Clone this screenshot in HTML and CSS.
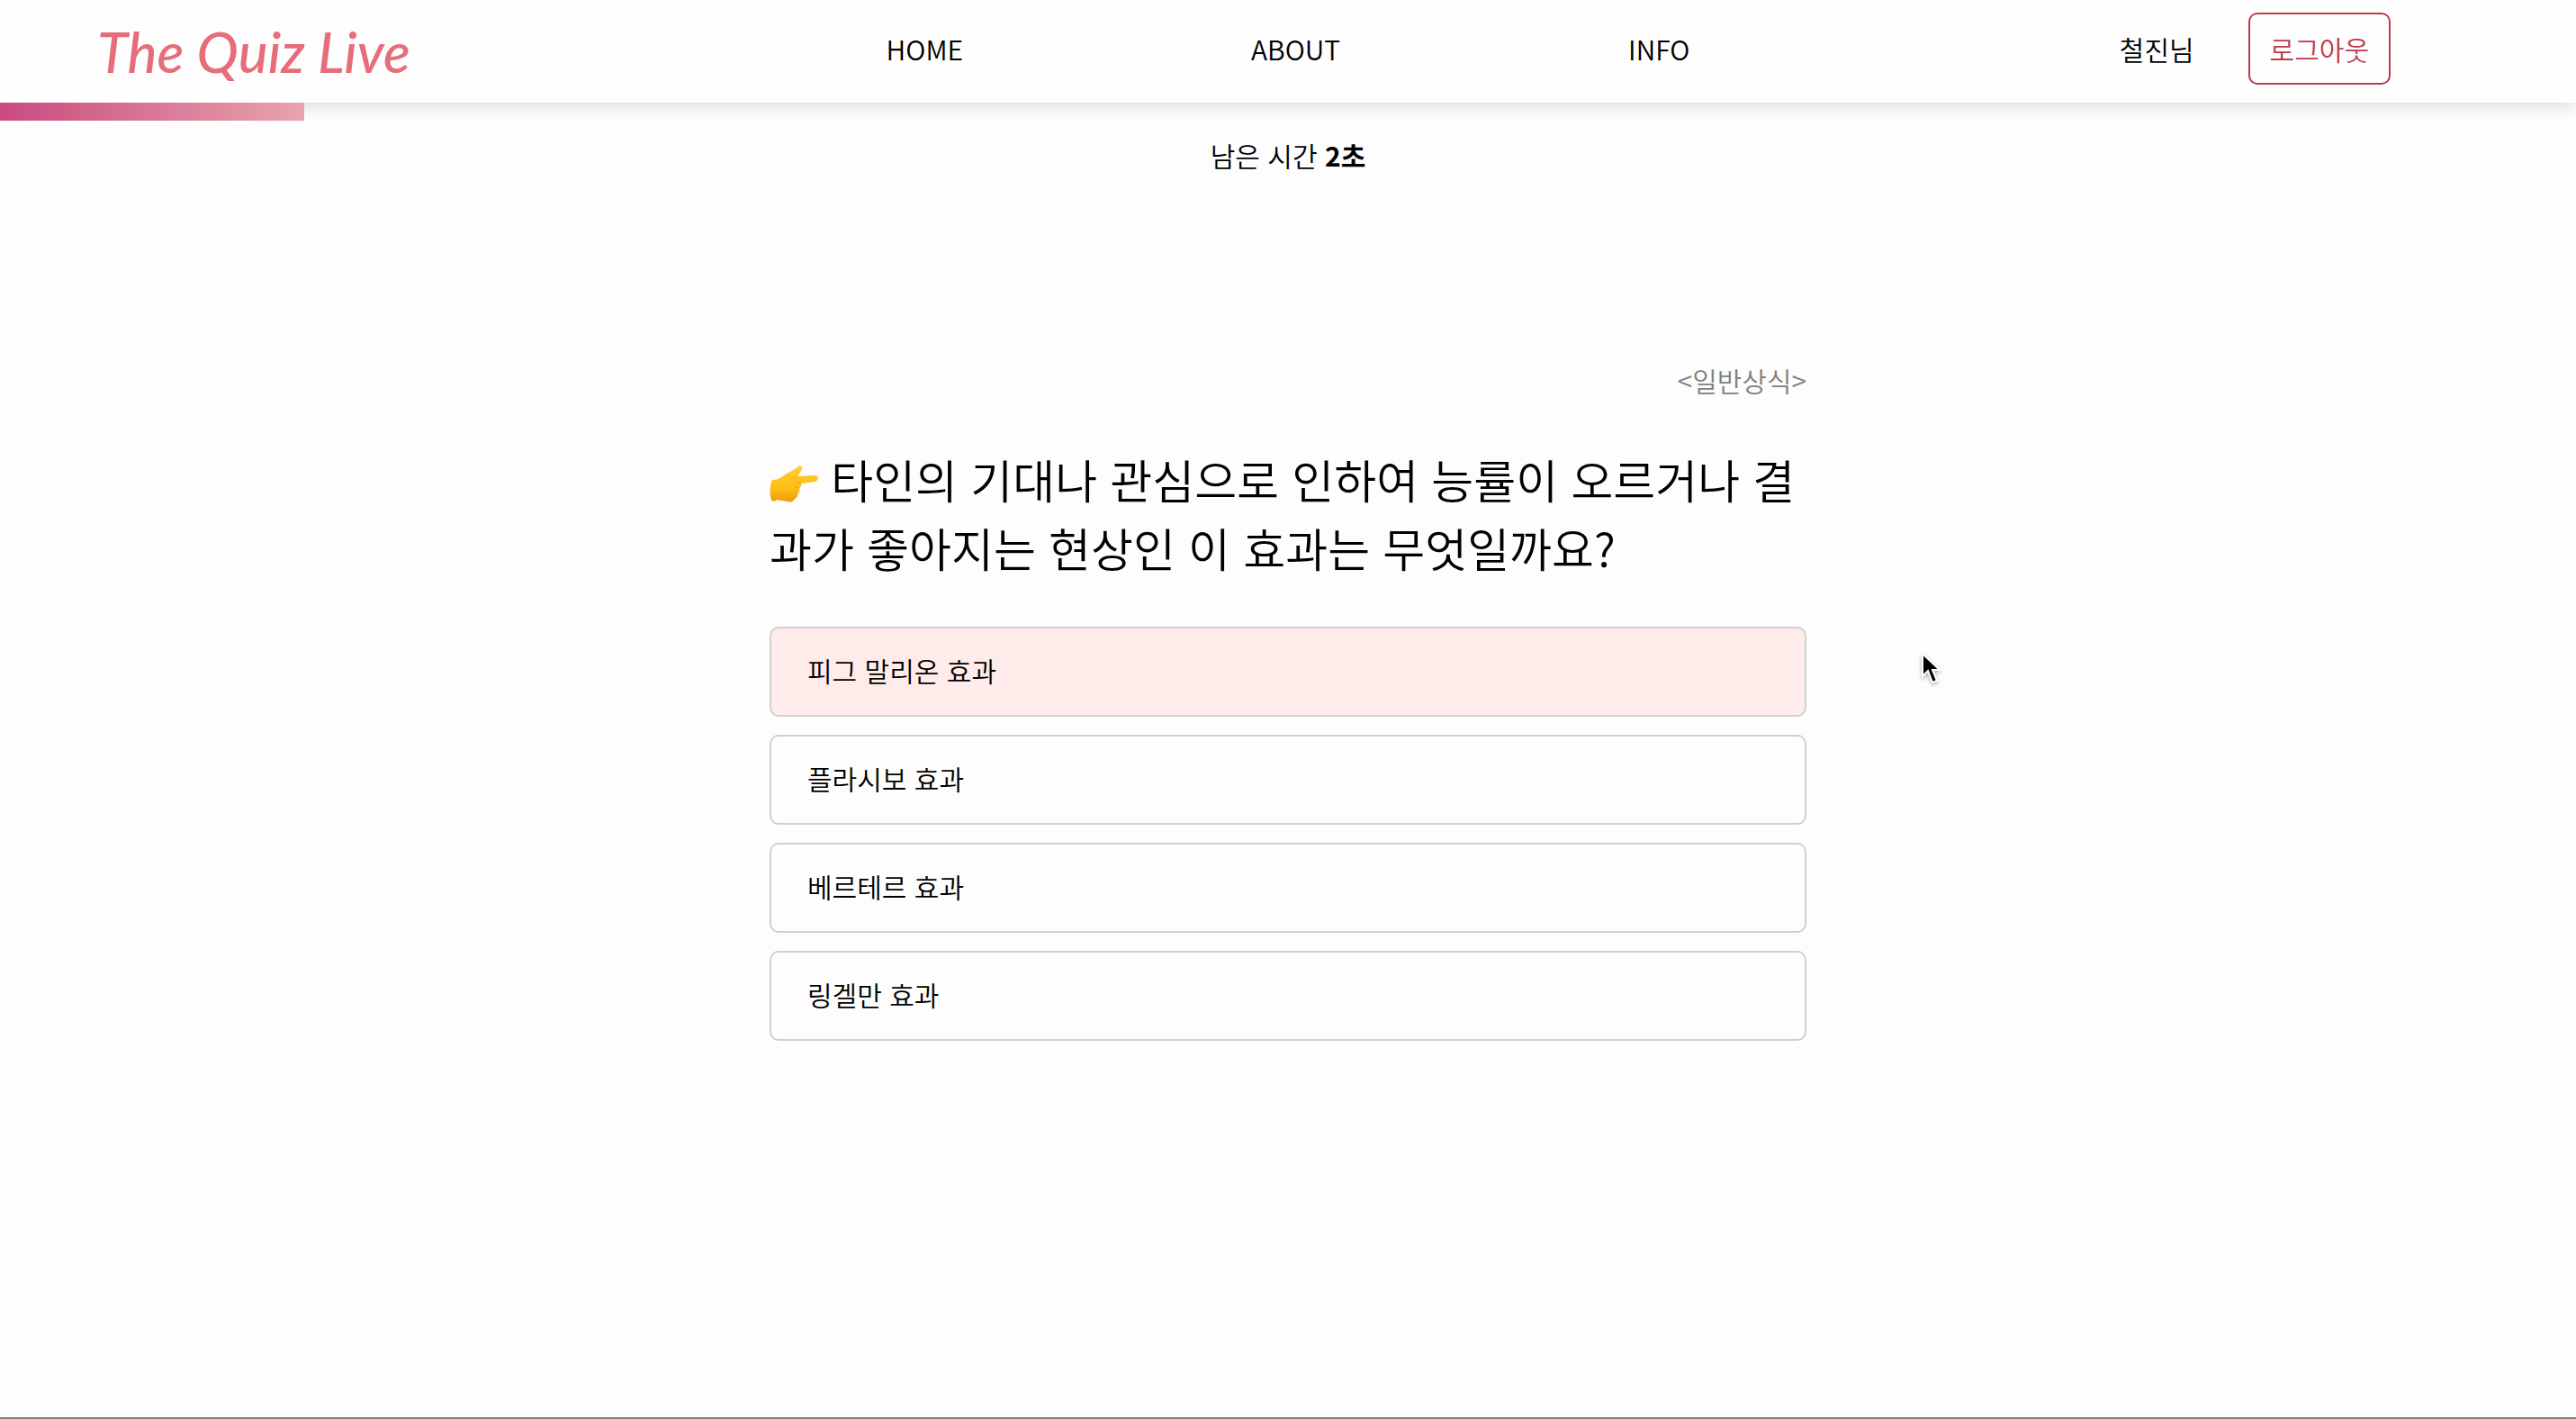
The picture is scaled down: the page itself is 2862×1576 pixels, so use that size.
FILE: index.html
```html
<!DOCTYPE html>
<html lang="ko">
<head>
  <meta charset="utf-8">
  <meta name="viewport" content="width=device-width, initial-scale=1">
  <title>The Quiz Live</title>
  <link rel="stylesheet" href="styles.css">
</head>
<body>
  <header class="header">
    <a class="logo" href="#">The Quiz Live</a>
    <nav class="nav">
      <a class="nav-link" href="#">HOME</a>
      <a class="nav-link" href="#">ABOUT</a>
      <a class="nav-link" href="#">INFO</a>
    </nav>
    <div class="account">
      <span>철진님</span>
      <button class="logout" type="button">로그아웃</button>
    </div>
  </header>
  <div class="progress"><div class="progress-bar" style="width: 11.8%"></div></div>
  <main class="quiz">
    <p class="timer">남은 시간 <strong>2초</strong></p>
    <section class="question">
      <p class="category">&lt;일반상식&gt;</p>
      <h1 class="question-text"><svg class="hand" viewBox="0 0 54 42" aria-hidden="true">
        <defs>
          <linearGradient id="skin" x1="0" y1="0" x2="0" y2="1">
            <stop offset="0" stop-color="#ffd02c"/>
            <stop offset="0.65" stop-color="#fdbd16"/>
            <stop offset="1" stop-color="#ee9b0c"/>
          </linearGradient>
        </defs>
        <path fill="url(#skin)" d="M3 17C8 17 12 15 16 12C21 8 27 7 32 2C34 0 37 2 36 5C35 8 33 10 31 13L50 12C55 12 55 18 50 19L35 21C36 23 35 25 33 26C34 29 33 31 31 32C32 35 30 37 28 38C27 41 24 42 20 41L8 39C6 41 3 41 2 39C0 33 0 23 3 17Z"/>
        <path fill="none" stroke="#f0a512" stroke-width="1" stroke-linecap="round" d="M35 21L29 20M33 26L28 25M31 32L27 31M31 13C29 14 27 15 25 15"/>
      </svg> 타인의 기대나 관심으로 인하여 능률이 오르거나 결과가 좋아지는 현상인 이 효과는 무엇일까요?</h1>
      <div class="options">
        <button class="option option-selected" type="button" aria-pressed="true">피그 말리온 효과</button>
        <button class="option" type="button" aria-pressed="false">플라시보 효과</button>
        <button class="option" type="button" aria-pressed="false">베르테르 효과</button>
        <button class="option" type="button" aria-pressed="false">링겔만 효과</button>
      </div>
      <svg class="cursor" viewBox="0 0 24 38" aria-hidden="true">
        <path fill="#000" stroke="#fff" stroke-width="2" d="M2 2V27L8 21L13 34L18 32L13 20H21Z"/>
      </svg>
    </section>
  </main>
</body>
</html>
```

FILE: styles.css
```css
* {
  box-sizing: border-box;
}

body {
  display: flex;
  flex-direction: column;
  min-height: 100vh;
  margin: 0;
  border-bottom: 2px solid #808080;
  background: #fdfdfd;
  color: #000;
  font-family: "Noto Sans CJK KR", sans-serif;
  font-size: 30px;
  font-weight: 350;
  line-height: 44px;
}

button {
  font: inherit;
  color: inherit;
  cursor: pointer;
}

a {
  color: inherit;
  text-decoration: none;
}

.header {
  display: grid;
  grid-template-columns: minmax(0, 1fr) auto minmax(0, 1fr);
  align-items: center;
  height: 114px;
  padding-bottom: 7px;
  background: #fefefe;
  box-shadow: 0 4px 16px rgba(0, 0, 0, 0.14);
}

.logo {
  padding: 6px 0 0 108px;
  color: #e66e7b;
  font-family: Lato, cursive;
  font-size: 62px;
  font-style: italic;
  font-weight: 500;
  line-height: 76px;
  white-space: nowrap;
}

.nav {
  display: flex;
  gap: 320px;
}

.account {
  display: flex;
  align-items: center;
  justify-content: flex-end;
  gap: 60px;
  padding-right: 206px;
}

.logout {
  height: 80px;
  padding: 0 22px;
  border: 2px solid #bb3b4c;
  border-radius: 10px;
  background: transparent;
  color: #bb3b4c;
}

.progress {
  position: relative;
  height: 20px;
}

.progress-bar {
  height: 100%;
  background: linear-gradient(to right, #c94b7f, #e8a3ae);
}

.quiz {
  flex: 1;
  padding-top: 16px;
}

.timer {
  margin: 0;
  text-align: center;
}

.timer strong {
  font-weight: 700;
}

.question {
  position: relative;
  max-width: 1152px;
  margin: 206px auto 0;
}

.category {
  margin: 0;
  color: #808080;
  text-align: right;
}

.question-text {
  margin: 50px 0;
  font-size: 51px;
  font-weight: 350;
  line-height: 76px;
  word-break: break-all;
}

.hand {
  width: 54px;
  height: 42px;
  vertical-align: -4px;
}

.options {
  display: flex;
  flex-direction: column;
  gap: 20px;
}

.option {
  height: 100px;
  padding: 0 40px 4px;
  border: 2px solid #d0d0d0;
  border-radius: 10px;
  background: transparent;
  text-align: left;
}

.option-selected {
  background: #feebea;
}

.cursor {
  position: absolute;
  top: 324px;
  left: 1279px;
  width: 24px;
  height: 38px;
  filter: drop-shadow(0 2px 2px rgba(0, 0, 0, 0.3));
}
```
